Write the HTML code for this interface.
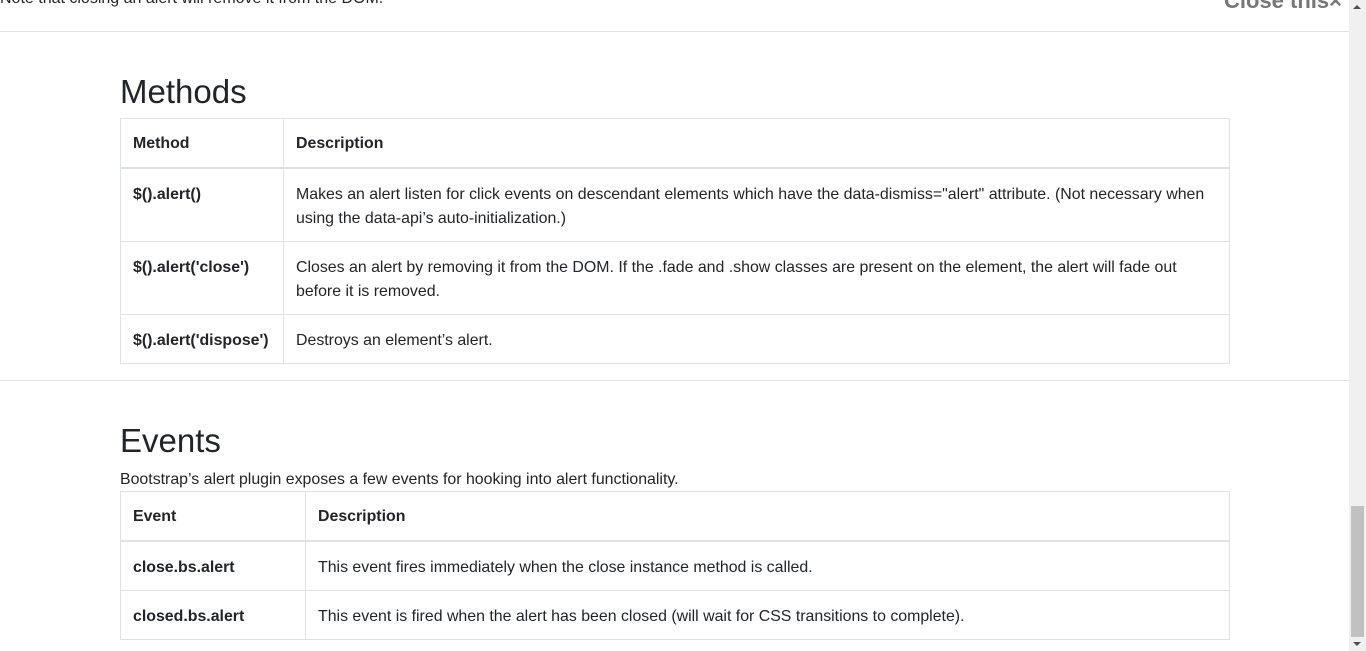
<!DOCTYPE html>
<html><head><style>
body{margin:0;width:1366px;height:651px;overflow:hidden;background:#fff;font-family:"Liberation Sans",sans-serif;color:#212529;position:relative}
.a{position:absolute}
.hr{position:absolute;left:0;width:1349px;height:1px;background:#e5e5e5}
table{position:absolute;left:120px;width:1110px;border-collapse:collapse;font-size:15.9px;line-height:24px}
td,th{border:1px solid #dee2e6;padding:0 12px;vertical-align:top;text-align:left}
th{font-weight:bold;border-bottom:2px solid #dee2e6;height:46px;padding-top:2px;vertical-align:middle}
td{padding-top:14px;padding-bottom:0}
tr.r2 td{height:58px}
tr.r1 td{height:34px}
h2{position:absolute;margin:0;font-weight:500;font-size:33px;left:120px}
</style></head><body>
<div class="a" style="left:0;top:-10px;font-size:16px">Note that closing an alert will remove it from the DOM.</div>
<div class="a" style="left:1224px;top:-12px;font-size:22px;font-weight:bold;color:#777">Close this×</div>
<div class="hr" style="top:31px"></div>
<h2 style="top:73px">Methods</h2>
<table style="top:118px">
<tr><th style="width:138px">Method</th><th>Description</th></tr>
<tr class="r2"><td><b>$().alert()</b></td><td>Makes an alert listen for click events on descendant elements which have the data-dismiss="alert" attribute. (Not necessary when using the data-api’s auto-initialization.)</td></tr>
<tr class="r2"><td><b>$().alert('close')</b></td><td>Closes an alert by removing it from the DOM. If the .fade and .show classes are present on the element, the alert will fade out before it is removed.</td></tr>
<tr class="r1"><td><b>$().alert('dispose')</b></td><td>Destroys an element’s alert.</td></tr>
</table>
<div class="hr" style="top:380px"></div>
<h2 style="top:422px">Events</h2>
<div class="a" style="left:120px;top:471px;font-size:15.9px">Bootstrap’s alert plugin exposes a few events for hooking into alert functionality.</div>
<table style="top:491px">
<tr><th style="width:160px">Event</th><th>Description</th></tr>
<tr class="r1"><td><b>close.bs.alert</b></td><td>This event fires immediately when the close instance method is called.</td></tr>
<tr class="r1"><td><b>closed.bs.alert</b></td><td>This event is fired when the alert has been closed (will wait for CSS transitions to complete).</td></tr>
</table>
<div class="a" style="left:1349px;top:0;width:17px;height:651px;background:#f0f0f0"></div>
<div class="a" style="left:1353px;top:5px;width:0;height:0;border-left:4px solid transparent;border-right:4px solid transparent;border-bottom:4px solid #505050"></div>
<div class="a" style="left:1351px;top:506px;width:13px;height:131px;background:#c1c1c1"></div>
<div class="a" style="left:1353px;top:642px;width:0;height:0;border-left:4px solid transparent;border-right:4px solid transparent;border-top:4px solid #505050"></div>
</body></html>
